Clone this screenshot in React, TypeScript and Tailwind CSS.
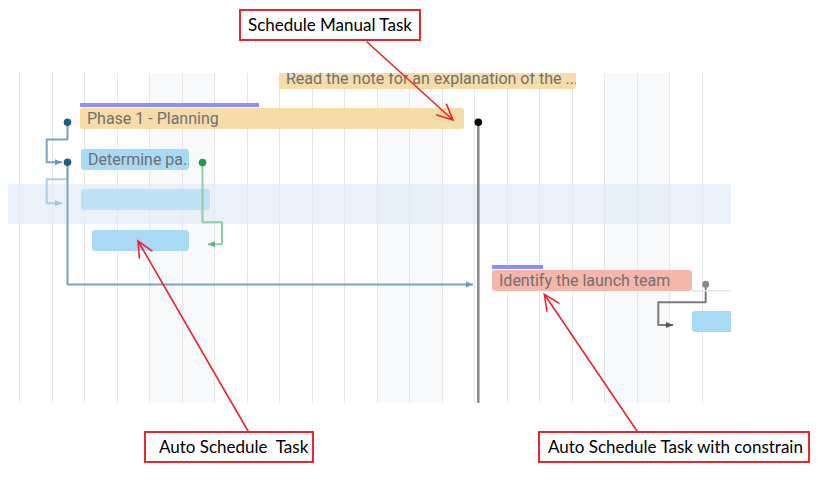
import React from "react";

const COLS = 22;
const weekend = new Set([4, 5, 11, 12, 18, 19]);

type Row = {
  x: number;
  w: number;
  color: string;
  text?: string;
  summary?: number;
};

const rows: Row[] = [
  { x: 271, w: 297, color: "bg-[#f6dca9]", text: "Read the note for an explanation of the ..." },
  { x: 72, w: 384, color: "bg-[#f6dca9]", text: "Phase 1 - Planning", summary: 179 },
  { x: 73, w: 108, color: "bg-[#a9daf5]", text: "Determine pa..." },
  { x: 73, w: 129, color: "bg-[#bfe2f7]" },
  { x: 84, w: 97, color: "bg-[#a9daf5]" },
  { x: 484, w: 200, color: "bg-[#f6b7ab]", text: "Identify the launch team", summary: 51 },
  { x: 684, w: 50, color: "bg-[#a9daf5]" },
];

function Bar({ row }: { row: Row }) {
  return (
    <div className="h-[40.5px] shrink-0 flex items-center">
      <div
        className={`relative h-[21px] shrink-0 rounded-[3px] whitespace-nowrap pl-[7px] text-[16px] leading-[21px] text-[#707070] ${row.color}`}
        style={{ marginLeft: row.x, width: row.w, fontFamily: "Roboto, sans-serif" }}
      >
        <div className="overflow-hidden">{row.text}</div>
        {row.summary ? (
          <div
            className="absolute left-0 -top-[5px] h-[4px] bg-[#8b8ff7]"
            style={{ width: row.summary }}
          />
        ) : null}
      </div>
    </div>
  );
}

export default function App() {
  return (
    <div className="relative w-[825px] h-[488px] bg-white overflow-hidden">
      <div className="pt-[73px] pl-[8px]">
        <div className="relative w-[723px] h-[330px] overflow-hidden">
          {/* grid columns */}
          <div className="absolute inset-0 flex">
            <div className="w-[11px] shrink-0" />
            {Array.from({ length: COLS }).map((_, i) => (
              <div
                key={i}
                className={`w-[32.5px] shrink-0 h-full border-l border-[#e6e6e6] ${
                  weekend.has(i) ? "bg-[#f8f9fb]" : ""
                }`}
              />
            ))}
          </div>

          {/* selected row */}
          <div className="absolute left-0 right-0 top-[111px] h-[40px] bg-[#dce8f6]/60" />

          {/* task rows */}
          <div className="relative flex flex-col -mt-[15px]">
            {rows.map((r, i) => (
              <Bar key={i} row={r} />
            ))}
          </div>

          {/* dependency lines */}
          <svg className="absolute inset-0 pointer-events-none" width="723" height="330">
            <defs>
              <marker id="ab" markerWidth="8" markerHeight="8" refX="7" refY="4" orient="auto" markerUnits="userSpaceOnUse">
                <path d="M0,1 L7,4 L0,7 z" fill="#6f9bbb" />
              </marker>
              <marker id="abl" markerWidth="8" markerHeight="8" refX="7" refY="4" orient="auto" markerUnits="userSpaceOnUse">
                <path d="M0,1 L7,4 L0,7 z" fill="#a9c4d8" />
              </marker>
              <marker id="ag" markerWidth="8" markerHeight="8" refX="7" refY="4" orient="auto" markerUnits="userSpaceOnUse">
                <path d="M0,1 L7,4 L0,7 z" fill="#5fb57f" />
              </marker>
              <marker id="ak" markerWidth="8" markerHeight="8" refX="7" refY="4" orient="auto" markerUnits="userSpaceOnUse">
                <path d="M0,1 L7,4 L0,7 z" fill="#555" />
              </marker>
            </defs>
            <g fill="none" strokeWidth="2" strokeLinejoin="round">
              <path d="M59.5 49 V66.5 H38.7 V89.3 H54" stroke="#7aa3c0" markerEnd="url(#ab)" />
              <path d="M59.5 89.3 V106.3 H38.7 V130.3 H54" stroke="#b3cde0" markerEnd="url(#abl)" />
              <path d="M59.5 89.3 V211.5 H465" stroke="#7aa3c0" markerEnd="url(#ab)" />
              <path d="M194.5 89.5 V149.3 H214 V171.3 H200" stroke="#8fcea6" markerEnd="url(#ag)" />
              <path d="M697.7 211.3 V229.3 H650.3 V252 H665" stroke="#7a7a7a" markerEnd="url(#ak)" />
              <path d="M684 217.7 H723" stroke="#e6e6e6" strokeWidth="1.5" />
            </g>
            <circle cx="59.5" cy="49.3" r="3.8" fill="#1d5d88" />
            <circle cx="59.5" cy="89.3" r="3.8" fill="#1d5d88" />
            <circle cx="194.5" cy="89.5" r="3.8" fill="#1f9a52" />
            <circle cx="697.7" cy="211.3" r="3.5" fill="#8a8a8a" />
            {/* manual task marker */}
            <path d="M470.3 49 V330" stroke="#8a8a8a" strokeWidth="2.5" />
            <circle cx="470.3" cy="49.3" r="3.8" fill="#000" />
          </svg>
        </div>
      </div>

      {/* annotations */}
      <div
        className="absolute left-[239px] top-[9px] w-[182px] h-[32px] border-2 border-[#e8262f] bg-white pl-[7px] text-[17px] leading-[28px] text-black whitespace-nowrap"
        style={{ fontFamily: "Lato, sans-serif" }}
      >
        Schedule Manual Task
      </div>
      <div
        className="absolute left-[144px] top-[431px] w-[170px] h-[32px] border-2 border-[#e8262f] bg-white pl-[13px] text-[17px] leading-[28px] text-black whitespace-pre"
        style={{ fontFamily: "Lato, sans-serif" }}
      >
        {"Auto Schedule  Task"}
      </div>
      <div
        className="absolute left-[538px] top-[431px] w-[272px] h-[32px] border-2 border-[#e8262f] bg-white pl-[8px] text-[17px] leading-[28px] text-black whitespace-nowrap"
        style={{ fontFamily: "Lato, sans-serif" }}
      >
        Auto Schedule Task with constrain
      </div>

      <svg className="absolute inset-0 pointer-events-none" width="825" height="488">
        <g stroke="#e8262f" strokeWidth="1.6" fill="none" strokeLinecap="round">
          <path d="M367 42 L453 120 M446.5 104.3 L453 120 L436.8 114.9" />
          <path d="M248 431 L138 241 M139.4 257.9 L138 241 L151.9 250.8" />
          <path d="M637 431 L544.3 294.3 M546.9 311.1 L544.3 294.3 L558.9 303.1" />
        </g>
      </svg>
    </div>
  );
}
